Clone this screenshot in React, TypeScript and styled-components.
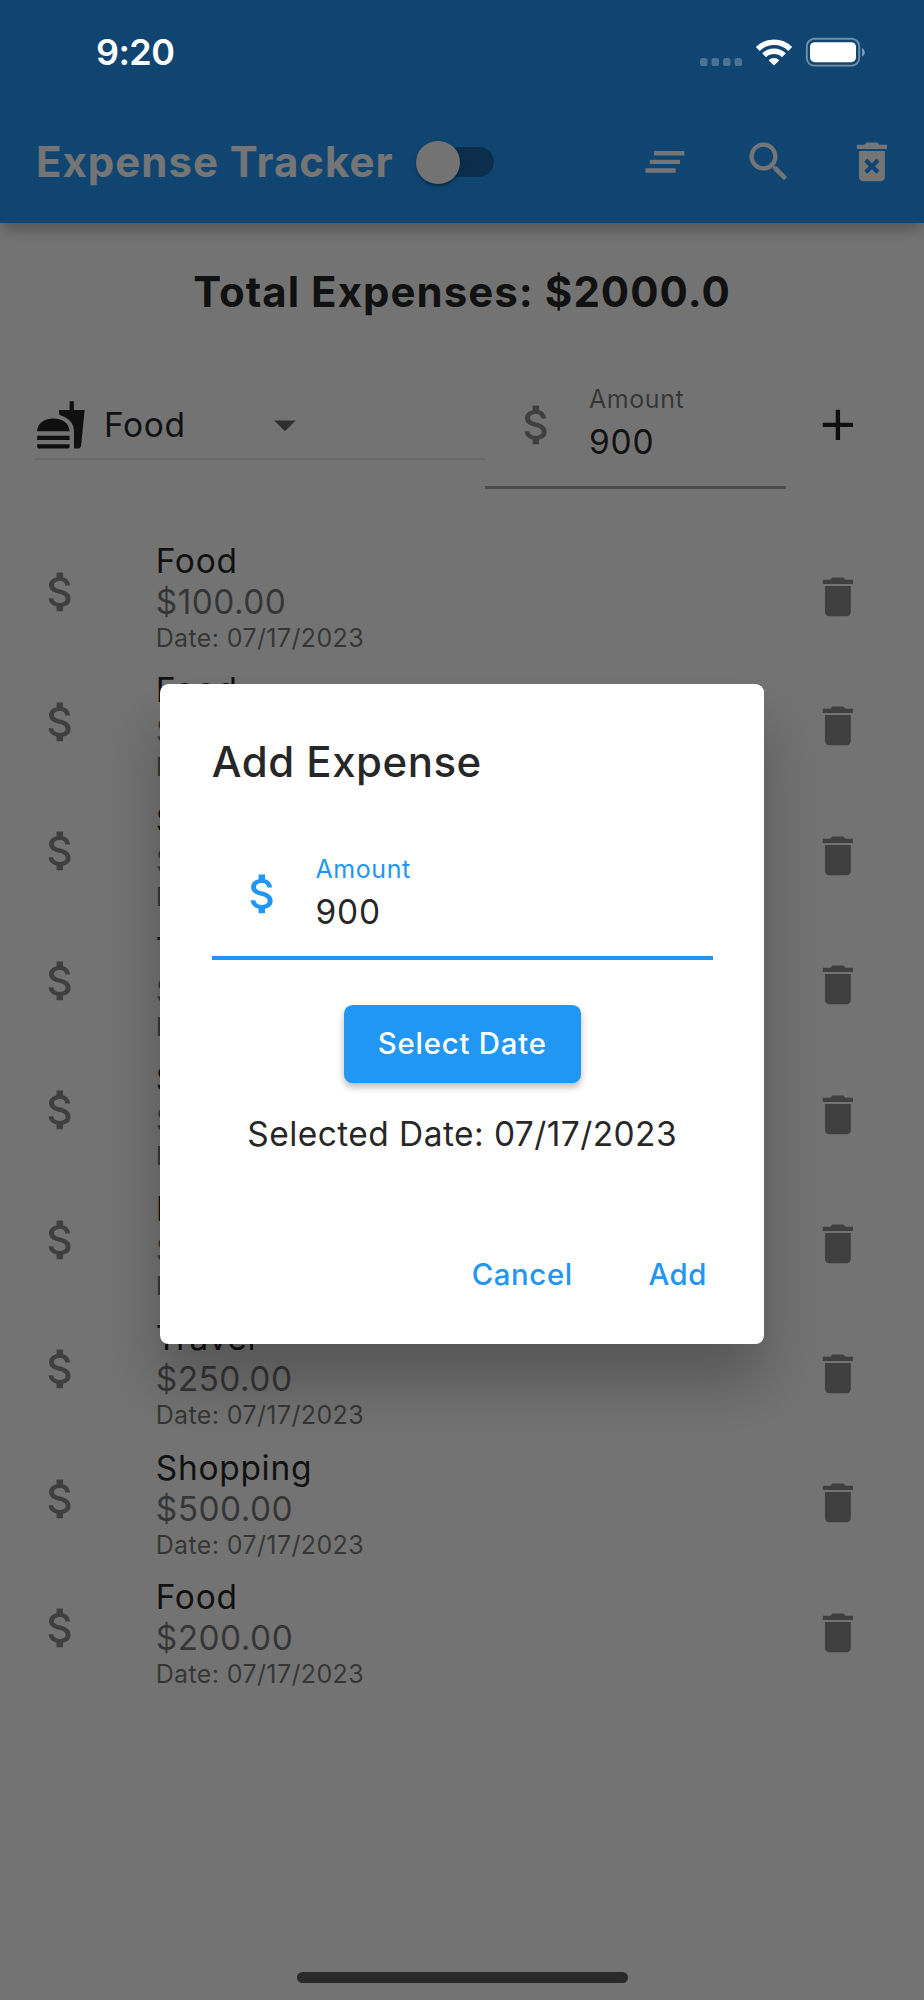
import React from "react";
import styled, { createGlobalStyle } from "styled-components";

const GlobalStyle = createGlobalStyle`
  *, *::before, *::after { box-sizing: border-box; }
  body { margin: 0; background: #737373; }
  button { font: inherit; border: 0; padding: 0; background: none; color: inherit; }
`;

const Screen = styled.main`
  position: relative;
  width: 924px;
  height: 2000px;
  overflow: hidden;
  background: #fafafa;
  font-family: Inter, "Liberation Sans", sans-serif;
  color: rgba(0, 0, 0, 0.87);
`;

const Text = styled.span<{
  $size: number;
  $line: number;
  $spacing?: number;
  $weight?: number;
  $color?: string;
}>`
  display: block;
  white-space: nowrap;
  font-size: ${(p) => p.$size}px;
  line-height: ${(p) => p.$line}px;
  letter-spacing: ${(p) => p.$spacing ?? 0}px;
  font-weight: ${(p) => p.$weight ?? 400};
  color: ${(p) => p.$color ?? "inherit"};
`;

/* Status bar */

const StatusBar = styled.div`
  position: absolute;
  z-index: 3;
  top: 0;
  left: 0;
  right: 0;
  height: 104px;
  padding: 0 59px 0 96px;
  display: flex;
  align-items: center;
  justify-content: space-between;
  color: #fff;
`;

const StatusIcons = styled.svg`
  display: block;
  width: 165px;
  height: 30px;
`;

/* App bar */

const AppBar = styled.header`
  position: relative;
  height: 222.6px;
  padding: 101.6px 0 0 36px;
  display: flex;
  align-items: center;
  background: #2196f3;
  color: #fff;
  box-shadow: 0 9px 14px -3px rgba(0, 0, 0, 0.28);
`;

const Toggle = styled.button`
  display: flex;
  align-items: center;
  width: 71.3px;
  height: 30.2px;
  margin-left: auto;
  border-radius: 16px;
  background: rgba(0, 0, 0, 0.32);
`;

const ToggleThumb = styled.span`
  flex: none;
  width: 43.2px;
  height: 43.2px;
  margin-left: -6.8px;
  border-radius: 50%;
  background: #fafafa;
  box-shadow: 0 4px 3px -2px rgba(0, 0, 0, 0.2), 0 2px 2px rgba(0, 0, 0, 0.14),
    0 2px 7px rgba(0, 0, 0, 0.12);
`;

const AppBarActions = styled.div`
  display: flex;
  margin-left: 118.8px;
`;

const IconButton = styled.button`
  flex: none;
  display: flex;
  align-items: center;
  justify-content: center;
  width: 103.6px;
  height: 103.6px;
`;

const IconSvg = styled.svg`
  display: block;
  flex: none;
  width: 51.8px;
  height: 51.8px;
  fill: currentColor;
`;

/* Body */

const Total = styled.h1`
  margin: 0;
  padding: 39px 0 39.4px;
  display: flex;
  justify-content: center;
`;

const Form = styled.section`
  height: 128px;
  padding-left: 34.8px;
  display: flex;
  align-items: center;
`;

const Dropdown = styled.div`
  flex: none;
  display: flex;
  align-items: center;
  width: 450.5px;
  height: 70px;
  padding-top: 2px;
  border-bottom: 2px solid #e5e5e5;
`;

const DropdownLabel = styled.div`
  width: 155px;
  margin-left: 17.3px;
`;

const Arrow = styled.span`
  color: rgba(0, 0, 0, 0.6);
`;

const Field = styled.div<{ $active?: boolean }>`
  flex: none;
  display: flex;
  width: ${(p) => (p.$active ? "500.8px" : "300.4px")};
  height: ${(p) => (p.$active ? "129.5px" : "128px")};
  border-bottom: ${(p) => (p.$active ? "4.4px solid #2196f3" : "3px solid rgba(0,0,0,0.33)")};
`;

const FieldIcon = styled.div<{ $active?: boolean }>`
  flex: none;
  display: flex;
  align-items: center;
  justify-content: center;
  width: 103.6px;
  height: 127px;
  padding-right: ${(p) => (p.$active ? "1px" : "0")};
  color: ${(p) => (p.$active ? "#2196f3" : "rgba(0,0,0,0.45)")};
`;

const FieldText = styled.div`
  display: flex;
  flex-direction: column;
  gap: 7px;
  padding-top: 23px;
`;

const List = styled.ul`
  list-style: none;
  margin: 0;
  padding: 42.8px 0 0;
`;

const Item = styled.li`
  display: flex;
  align-items: flex-start;
  height: 129.55px;
  padding: 0 34.7px;
`;

const ItemIcon = styled.div`
  width: 121px;
  padding-top: 34.2px;
  color: rgba(0, 0, 0, 0.45);
`;

const ItemText = styled.div`
  flex: 1;
  padding-top: 9.1px;
`;

const ItemAction = styled.div`
  align-self: center;
  width: 51.8px;
  margin-right: 25.4px;
  color: rgba(0, 0, 0, 0.45);
`;

/* Dialog */

const Scrim = styled.div`
  position: absolute;
  z-index: 2;
  inset: 0;
  padding: 101.5px 0 73.4px;
  display: flex;
  align-items: center;
  justify-content: center;
  background: rgba(0, 0, 0, 0.54);
`;

const Dialog = styled.section`
  display: flex;
  flex-direction: column;
  width: 604px;
  height: 660.6px;
  padding: 51.8px 17.2px 31px 51.8px;
  border-radius: 8.6px;
  background: #fff;
  box-shadow: 0 40px 58px rgba(0, 0, 0, 0.25);
`;

const DialogContent = styled.div`
  width: 500.8px;
  padding-top: 43.2px;
  display: flex;
  flex-direction: column;
  align-items: center;
`;

const DateButton = styled.button`
  display: flex;
  align-items: center;
  justify-content: center;
  width: 237.4px;
  height: 77.7px;
  margin: 45.1px 0 29.8px;
  border-radius: 8.6px;
  background: #2196f3;
  box-shadow: 0 4px 7px rgba(0, 0, 0, 0.28);
`;

const DialogActions = styled.div`
  display: flex;
  justify-content: flex-end;
  gap: 17.3px;
  margin-top: auto;
`;

const TextButton = styled.button`
  display: flex;
  align-items: center;
  justify-content: center;
  width: 138.2px;
  height: 77.7px;
`;

const HomeIndicator = styled.div`
  position: absolute;
  z-index: 3;
  left: 297px;
  bottom: 17.3px;
  width: 330.5px;
  height: 10.8px;
  border-radius: 6px;
  background: #2a2a2a;
`;

const paths = {
  clearAll: "M5 13h14v-2H5v2zm-2 4h14v-2H3v2zM7 7v2h14V7H7z",
  search:
    "M15.5 14h-.79l-.28-.27C15.41 12.59 16 11.11 16 9.5 16 5.91 13.09 3 9.5 3S3 5.91 3 9.5 5.91 16 9.5 16c1.61 0 3.09-.59 4.23-1.57l.27.28v.79l5 4.99L20.49 19l-4.99-5zm-6 0C7.01 14 5 11.99 5 9.5S7.01 5 9.5 5 14 7.01 14 9.5 11.99 14 9.5 14z",
  deleteForever:
    "M6 19c0 1.1.9 2 2 2h8c1.1 0 2-.9 2-2V7H6v12zm2.46-7.12l1.41-1.41L12 12.59l2.12-2.12 1.41 1.41L13.41 14l2.12 2.12-1.41 1.41L12 15.41l-2.12 2.12-1.41-1.41L10.59 14l-2.13-2.12zM15.5 4l-1-1h-5l-1 1H5v2h14V4z",
  trash: "M6 19c0 1.1.9 2 2 2h8c1.1 0 2-.9 2-2V7H6v12zM19 4h-3.5l-1-1h-5l-1 1H5v2h14V4z",
  fastfood:
    "M18.06 22.99h1.66c.84 0 1.53-.64 1.63-1.46L23 5.05h-5V1h-1.97v4.05h-4.97l.3 2.34c1.71.47 3.31 1.32 4.27 2.26 1.44 1.42 2.43 2.89 2.43 5.29v8.05zM1 21.99V21h15.03v.99c0 .55-.45 1-1.01 1H2.01c-.56 0-1.01-.45-1.01-1zm15.03-7c0-8-15.03-8-15.03 0h15.03zM1.02 17h15v2h-15z",
  dropDown: "M7 10l5 5 5-5z",
  add: "M19 13h-6v6h-2v-6H5v-2h6V5h2v6h6v2z",
  dollar:
    "M11.8 10.9c-2.27-.59-3-1.2-3-2.15 0-1.09 1.01-1.85 2.7-1.85 1.78 0 2.44.85 2.5 2.1h2.21c-.07-1.72-1.12-3.3-3.21-3.81V3h-3v2.16c-1.94.42-3.5 1.68-3.5 3.61 0 2.31 1.91 3.46 4.7 4.13 2.5.6 3 1.48 3 2.41 0 .69-.49 1.79-2.7 1.79-2.06 0-2.87-.92-2.98-2.1h-2.2c.12 2.19 1.76 3.42 3.68 3.83V21h3v-2.15c1.95-.37 3.5-1.5 3.5-3.55 0-2.84-2.43-3.81-4.7-4.4z",
};

const Icon = ({ name }: { name: keyof typeof paths }) => (
  <IconSvg viewBox="0 0 24 24" aria-hidden="true">
    <path d={paths[name]} />
  </IconSvg>
);

const AmountField = ({ active }: { active?: boolean }) => (
  <Field $active={active}>
    <FieldIcon $active={active}>
      <Icon name="dollar" />
    </FieldIcon>
    <FieldText>
      <Text $size={25} $line={30} $spacing={0.6} $color={active ? "#2196f3" : "rgba(0,0,0,0.54)"}>
        Amount
      </Text>
      <Text $size={33.5} $line={42} $spacing={0.8}>
        900
      </Text>
    </FieldText>
  </Field>
);

const expenses = [
  { category: "Food", amount: 100 },
  { category: "Food", amount: 150 },
  { category: "Shopping", amount: 300 },
  { category: "Travel", amount: 200 },
  { category: "Shopping", amount: 200 },
  { category: "Food", amount: 100 },
  { category: "Travel", amount: 250 },
  { category: "Shopping", amount: 500 },
  { category: "Food", amount: 200 },
];

export default function App() {
  return (
    <Screen>
      <GlobalStyle />
      <StatusBar>
        <Text $size={36} $line={44} $weight={600} $spacing={-0.6}>
          9:20
        </Text>
        <StatusIcons viewBox="700 37 165 30" aria-hidden="true">
          <g fill="#fff" fillOpacity="0.25">
            <rect x="700" y="58" width="7.6" height="8" rx="2.6" />
            <rect x="711.5" y="58" width="7.6" height="8" rx="2.6" />
            <rect x="723" y="58" width="7.6" height="8" rx="2.6" />
            <rect x="734.5" y="58" width="7.6" height="8" rx="2.6" />
          </g>
          <g fill="none" stroke="#fff" strokeWidth="5.6">
            <path d="M757.8 48.9A23.2 23.2 0 0 1 790.2 48.9" />
            <path d="M764.1 55.2A14.3 14.3 0 0 1 783.9 55.2" />
          </g>
          <path d="M774 65.6l-5.4-5.4a7.7 7.7 0 0 1 10.8 0z" fill="#fff" />
          <rect x="806.8" y="38.8" width="52.4" height="26.8" rx="7.6" fill="none" stroke="#fff" strokeOpacity="0.4" strokeWidth="1.9" />
          <rect x="810" y="42.2" width="46" height="20" rx="4.6" fill="#fff" />
          <path d="M862 48v8.6c1.7-.7 2.8-2.4 2.8-4.3s-1.1-3.6-2.8-4.3z" fill="#fff" fillOpacity="0.45" />
        </StatusIcons>
      </StatusBar>

      <AppBar>
        <Text $size={42} $line={52} $weight={700} $spacing={0.98}>
          Expense Tracker
        </Text>
        <Toggle aria-label="Dark mode">
          <ToggleThumb />
        </Toggle>
        <AppBarActions>
          <IconButton aria-label="Sort">
            <Icon name="clearAll" />
          </IconButton>
          <IconButton aria-label="Search">
            <Icon name="search" />
          </IconButton>
          <IconButton aria-label="Delete all">
            <Icon name="deleteForever" />
          </IconButton>
        </AppBarActions>
      </AppBar>

      <Total>
        <Text $size={42} $line={60} $weight={700} $spacing={1.02}>
          Total Expenses: $2000.0
        </Text>
      </Total>

      <Form>
        <Dropdown>
          <Icon name="fastfood" />
          <DropdownLabel>
            <Text $size={33.5} $line={42} $spacing={0.7}>
              Food
            </Text>
          </DropdownLabel>
          <Arrow>
            <Icon name="dropDown" />
          </Arrow>
        </Dropdown>
        <AmountField />
        <IconButton aria-label="Add expense">
          <Icon name="add" />
        </IconButton>
      </Form>

      <List>
        {expenses.map((e, i) => (
          <Item key={i}>
            <ItemIcon>
              <Icon name="dollar" />
            </ItemIcon>
            <ItemText>
              <Text $size={33.5} $line={41} $spacing={0.7}>
                {e.category}
              </Text>
              <Text $size={33.5} $line={41} $spacing={0.45} $color="rgba(0,0,0,0.54)">
                ${e.amount.toFixed(2)}
              </Text>
              <Text $size={25} $line={31} $spacing={0.38} $color="rgba(0,0,0,0.54)">
                Date: 07/17/2023
              </Text>
            </ItemText>
            <ItemAction>
              <Icon name="trash" />
            </ItemAction>
          </Item>
        ))}
      </List>

      <Scrim>
        <Dialog role="dialog" aria-label="Add Expense">
          <Text $size={42} $line={52} $weight={500} $spacing={0.5}>
            Add Expense
          </Text>
          <DialogContent>
            <AmountField active />
            <DateButton>
              <Text $size={29.3} $line={40} $weight={500} $spacing={0.8} $color="#fff">
                Select Date
              </Text>
            </DateButton>
            <Text $size={33.5} $line={42} $spacing={0.43}>
              Selected Date: 07/17/2023
            </Text>
          </DialogContent>
          <DialogActions>
            <TextButton>
              <Text $size={29.3} $line={40} $weight={500} $spacing={0.65} $color="#2196f3">
                Cancel
              </Text>
            </TextButton>
            <TextButton>
              <Text $size={29.3} $line={40} $weight={500} $spacing={0.6} $color="#2196f3">
                Add
              </Text>
            </TextButton>
          </DialogActions>
        </Dialog>
      </Scrim>
      <HomeIndicator />
    </Screen>
  );
}
